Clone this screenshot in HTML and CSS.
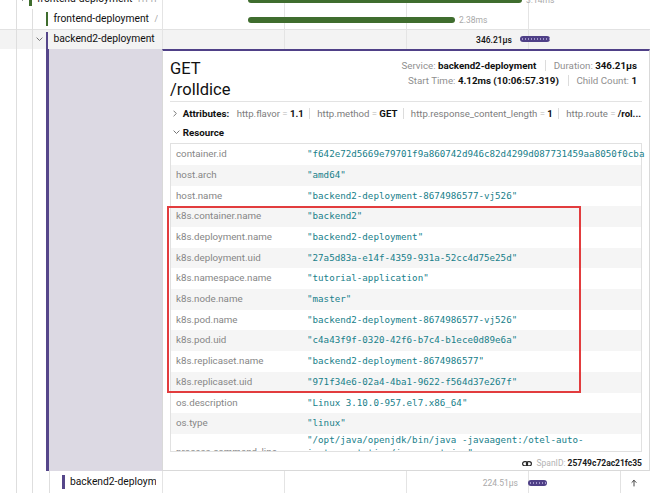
FILE: index.html
```html
<!DOCTYPE html>
<html>
<head>
<meta charset="utf-8">
<link rel="stylesheet" href="styles.css">
</head>
<body>
<div class="trace">
  <div class="row">
    <div class="name-cell">
      <span class="indent"></span>
      <span class="toggle"><svg class="chev" viewBox="0 0 8 5"><polyline points="1,1 4,4 7,1"/></svg></span>
      <span class="svc-bar svc-bar--green"></span>
      <span class="span-name">frontend-deployment<span class="op">HTTP GET</span></span>
    </div>
    <div class="timeline-cell">
      <span class="span-bar span-bar--green" style="left:86px;width:274px"></span>
      <span class="bar-label" style="left:364px">3.14ms</span>
    </div>
  </div>
  <div class="row">
    <div class="name-cell">
      <span class="indent"></span><span class="indent"></span>
      <span class="toggle"></span>
      <span class="svc-bar svc-bar--green"></span>
      <span class="span-name">frontend-deployment<span class="op">/rolldice</span></span>
    </div>
    <div class="timeline-cell">
      <span class="span-bar span-bar--green" style="left:86px;width:207px"></span>
      <span class="bar-label" style="left:297px">2.38ms</span>
    </div>
  </div>
  <div class="row row--expanded">
    <div class="name-cell">
      <span class="indent"></span><span class="indent"></span>
      <span class="toggle"><svg class="chev" viewBox="0 0 8 5"><polyline points="1,1 4,4 7,1"/></svg></span>
      <span class="svc-bar svc-bar--purple svc-bar--open"></span>
      <span class="span-name">backend2-deployment<span class="op">GET /rolldice</span></span>
    </div>
    <div class="timeline-cell">
      <span class="bar-label bar-label--strong" style="right:134px">346.21µs</span>
      <span class="span-bar span-bar--purple span-bar--logs" style="left:358px;width:30px"></span>
    </div>
  </div>

  <div class="detail-row">
    <div class="name-cell name-cell--detail">
      <span class="indent"></span><span class="indent"></span>
      <span class="toggle"></span>
      <span class="accent"></span>
    </div>
    <div class="detail-cell">
      <div class="detail-wrapper">
        <div class="detail-header">
          <h2 class="op-title">GET /rolldice</h2>
          <div class="overview">
            <div class="ov-line">
              <span class="ov-item"><span class="ov-label">Service:</span> <strong>backend2-deployment</strong></span>
              <span class="sep"></span>
              <span class="ov-item"><span class="ov-label">Duration:</span> <strong>346.21µs</strong></span>
            </div>
            <div class="ov-line">
              <span class="ov-item"><span class="ov-label">Start Time:</span> <strong>4.12ms (10:06:57.319)</strong></span>
              <span class="sep"></span>
              <span class="ov-item"><span class="ov-label">Child Count:</span> <strong>1</strong></span>
            </div>
          </div>
        </div>
        <div class="divider"></div>

        <div class="section-head section-head--attrs">
          <span class="sec-chev"><svg class="chev-right" viewBox="0 0 5 8"><polyline points="1,1 4,4 1,7"/></svg></span>
          <strong class="sec-title">Attributes:</strong>
          <span class="attr"><span class="attr-key">http.flavor</span><span class="attr-eq">=</span><strong>1.1</strong></span>
          <span class="sep"></span>
          <span class="attr"><span class="attr-key">http.method</span><span class="attr-eq">=</span><strong>GET</strong></span>
          <span class="sep"></span>
          <span class="attr"><span class="attr-key">http.response_content_length</span><span class="attr-eq">=</span><strong>1</strong></span>
          <span class="sep"></span>
          <span class="attr"><span class="attr-key">http.route</span><span class="attr-eq">=</span><strong>/rol...</strong></span>
        </div>

        <div class="section-head section-head--res">
          <span class="sec-chev"><svg class="chev" viewBox="0 0 8 5"><polyline points="1,1 4,4 7,1"/></svg></span>
          <strong class="sec-title">Resource</strong>
        </div>

        <div class="kv-block">
          <div class="kv-wrap">
            <table class="kv-table">
              <tr class="kv-row"><td class="kv-key">container.id</td><td class="kv-val kv-val--nowrap">"f642e72d5669e79701f9a860742d946c82d4299d087731459aa8050f0cba</td></tr>
              <tr class="kv-row"><td class="kv-key">host.arch</td><td class="kv-val">"amd64"</td></tr>
              <tr class="kv-row"><td class="kv-key">host.name</td><td class="kv-val">"backend2-deployment-8674986577-vj526"</td></tr>
              <tr class="kv-row"><td class="kv-key">k8s.container.name</td><td class="kv-val">"backend2"</td></tr>
              <tr class="kv-row"><td class="kv-key">k8s.deployment.name</td><td class="kv-val">"backend2-deployment"</td></tr>
              <tr class="kv-row"><td class="kv-key">k8s.deployment.uid</td><td class="kv-val">"27a5d83a-e14f-4359-931a-52cc4d75e25d"</td></tr>
              <tr class="kv-row"><td class="kv-key">k8s.namespace.name</td><td class="kv-val">"tutorial-application"</td></tr>
              <tr class="kv-row"><td class="kv-key">k8s.node.name</td><td class="kv-val">"master"</td></tr>
              <tr class="kv-row"><td class="kv-key">k8s.pod.name</td><td class="kv-val">"backend2-deployment-8674986577-vj526"</td></tr>
              <tr class="kv-row"><td class="kv-key">k8s.pod.uid</td><td class="kv-val">"c4a43f9f-0320-42f6-b7c4-b1ece0d89e6a"</td></tr>
              <tr class="kv-row"><td class="kv-key">k8s.replicaset.name</td><td class="kv-val">"backend2-deployment-8674986577"</td></tr>
              <tr class="kv-row"><td class="kv-key">k8s.replicaset.uid</td><td class="kv-val">"971f34e6-02a4-4ba1-9622-f564d37e267f"</td></tr>
              <tr class="kv-row"><td class="kv-key">os.description</td><td class="kv-val">"Linux 3.10.0-957.el7.x86_64"</td></tr>
              <tr class="kv-row"><td class="kv-key">os.type</td><td class="kv-val">"linux"</td></tr>
              <tr class="kv-row kv-row--tall"><td class="kv-key">process.command_line</td><td class="kv-val">"/opt/java/openjdk/bin/java -javaagent:/otel-auto-instrumentation/javaagent.jar"</td></tr>
            </table>
          </div>
          <div class="highlight"></div>
        </div>

        <div class="span-id-line">
          <svg class="link-icon" viewBox="0 0 20 11"><rect x="1.2" y="1.2" width="10" height="8.6" rx="4.3"/><rect x="8.8" y="1.2" width="10" height="8.6" rx="4.3"/></svg>
          <span class="sid-label">SpanID:</span>
          <strong class="sid-value">25749c72ac21fc35</strong>
        </div>
      </div>
    </div>
  </div>

  <div class="row row--last">
    <div class="name-cell name-cell--tight">
      <span class="indent"></span><span class="indent"></span><span class="indent"></span>
      <span class="toggle"></span>
      <span class="svc-bar svc-bar--purple"></span>
      <span class="span-name">backend2-deployment<span class="op">GET</span></span>
    </div>
    <div class="timeline-cell">
      <span class="bar-label" style="right:127px">224.51µs</span>
      <span class="span-bar span-bar--purple span-bar--logs" style="left:366px;width:19px"></span>
    </div>
  </div>
</div>
<button class="scroll-top" type="button" aria-label="Scroll to top">
  <svg viewBox="0 0 8 10"><path d="M4 9V1.5M1.2 4.2L4 1.4l2.8 2.8"/></svg>
</button>
</body>
</html>
```

FILE: styles.css
```css
* { box-sizing: border-box; }
html, body { margin: 0; padding: 0; }
body {
  width: 650px;
  height: 493px;
  overflow: hidden;
  position: relative;
  background: #fff;
  font-family: Roboto, "Liberation Sans", sans-serif;
  color: #1a1a1a;
}

.trace { margin-top: -11px; }

.row { display: flex; height: 20px; }
.row--expanded {
  height: 19.5px;
  background: #f3f3f3;
  box-shadow: inset 0 1px 0 #e2e2e2;
}
.row--last { height: 22px; }

/* name column */
.name-cell {
  width: 162px;
  flex: none;
  display: flex;
  align-items: stretch;
  padding-right: 4.5px;
  overflow: hidden;
}
.name-cell--detail { padding-right: 0; }
.name-cell--tight { padding-right: 5.8px; }
.indent {
  width: 16.5px;
  flex: none;
  border-right: 1px solid #dedede;
}
.toggle {
  width: 12.8px;
  flex: none;
  display: flex;
  align-items: center;
  justify-content: center;
}
.chev { width: 7px; height: 4.4px; }
.chev polyline, .chev-right polyline {
  fill: none;
  stroke: #6f6f6f;
  stroke-width: 1.1;
  stroke-linecap: round;
  stroke-linejoin: round;
}
.svc-bar {
  width: 2.7px;
  height: 13.5px;
  flex: none;
  align-self: center;
}
.svc-bar--green { background: #3f6d2e; }
.svc-bar--purple { background: #55468a; }
.svc-bar--open { align-self: stretch; height: auto; margin-top: 3px; }
.span-name {
  flex: 1;
  min-width: 0;
  margin-left: 5px;
  font-size: 10.3px;
  line-height: 20px;
  white-space: nowrap;
  overflow: hidden;
  align-self: center;
  color: #111;
}
.op {
  margin-left: 5.5px;
  font-size: 8.6px;
  color: #a2a2a2;
}

/* timeline column */
.timeline-cell {
  flex: 1;
  position: relative;
  background-image: linear-gradient(90deg, #e4e4e4 1px, transparent 1px);
  background-size: 122px 100%;
}
.span-bar {
  position: absolute;
  top: 50%;
  height: 6px;
  margin-top: -2.5px;
  border-radius: 3px;
}
.span-bar--green { background: #3f6d2e; }
.span-bar--purple { background: #4f4087; }
.span-bar--logs {
  background-image: radial-gradient(circle, rgba(190, 180, 225, 0.75) 0.5px, transparent 0.85px);
  background-size: 3px 6px;
  background-position: 1px 0;
}
.bar-label {
  position: absolute;
  top: 50%;
  transform: translateY(-45%);
  font-size: 8.5px;
  line-height: 10px;
  color: #a9a9a9;
  white-space: nowrap;
}
.bar-label--strong { color: #111; font-weight: 500; margin-right: 4px; }
.row--last .bar-label { margin-right: 5px; }

/* detail row */
.detail-row { display: flex; height: 422.5px; }
.accent {
  flex: 1;
  border-left: 3px solid #55468a;
  background: #dcd9e3;
}
.detail-cell { flex: 1; min-width: 0; }
.detail-wrapper {
  height: 100%;
  background: #fff;
  border: 1px solid #d9d9d9;
  border-top: 2px solid #4f4087;
  padding: 7px 7px 0 7px;
}

.detail-header {
  display: flex;
  justify-content: space-between;
  align-items: flex-start;
  height: 43px;
}
.op-title {
  margin: 0;
  width: 90px;
  font-size: 16.5px;
  line-height: 21px;
  font-weight: 400;
  color: #111;
}
.overview {
  display: flex;
  flex-direction: column;
  align-items: flex-end;
  margin-right: 5px;
  font-size: 9.75px;
  line-height: 15px;
  margin-top: 0.5px;
}
.ov-line { display: flex; align-items: center; white-space: nowrap; }
.ov-label { color: #8f8f8f; }
.ov-item strong { color: #111; font-weight: 700; }
.sep {
  width: 1px;
  height: 11px;
  background: #dcdcdc;
  margin: 0 7px;
  flex: none;
}
.ov-line .sep { margin: 0 7.5px 0 9px; }

.divider { height: 1px; background: #e3e3e3; }

.section-head {
  display: flex;
  align-items: center;
  height: 15px;
  font-size: 9.6px;
  white-space: nowrap;
  overflow: hidden;
}
.section-head--attrs { margin-top: 4px; }
.section-head--res { margin-top: 4.6px; }
.sec-chev {
  width: 12.7px;
  flex: none;
  display: flex;
  align-items: center;
  padding-left: 2.5px;
}
.chev-right { width: 4.2px; height: 7px; }
.sec-title { font-weight: 700; color: #111; margin-right: 7.5px; font-size: 9.75px; }
.attr-key { color: #7d7d7d; }
.attr-eq { color: #b5b5b5; margin: 0 2.3px; }
.attr strong { color: #111; font-weight: 700; }
.section-head--attrs .sep { margin: 0 7px 0 5.5px; }

/* key/value table */
.kv-block { position: relative; margin-top: 3px; }
.kv-wrap {
  height: 309.3px;
  border: 1px solid #e1e1e1;
  overflow-x: visible;
  overflow-y: clip;
}
.kv-table {
  width: 100%;
  border-collapse: collapse;
  table-layout: fixed;
}
.kv-table td {
  padding: 4px 5px;
  height: 20.7px;
  line-height: 12.7px;
  vertical-align: middle;
}
.kv-row:nth-child(2n) td { background: #f5f5f5; }
.kv-key {
  width: 131px;
  padding-left: 4px;
  color: #868686;
  font-size: 9.75px;
  white-space: pre;
}
.kv-val {
  font-family: "DejaVu Sans Mono", "Liberation Mono", monospace;
  font-size: 9.2px;
  color: #17808a;
}
.kv-val--nowrap { white-space: nowrap; }
.kv-row--tall .kv-val { padding-top: 0; }
.kv-row--tall .kv-key { vertical-align: top; padding-top: 12px; }

.highlight {
  position: absolute;
  left: -3.3px;
  top: 63px;
  width: 414.3px;
  height: 187px;
  border: 2px solid #e23c3e;
  pointer-events: none;
}

.span-id-line {
  display: flex;
  justify-content: flex-end;
  align-items: center;
  height: 12px;
  margin-top: 5px;
  font-size: 8.5px;
  white-space: nowrap;
}
.link-icon { width: 10px; height: 5.5px; margin-right: 4px; }
.link-icon rect { fill: none; stroke: #2a2a2a; stroke-width: 2.4; }
.sid-label { color: #b3b3b3; margin-right: 2px; }
.sid-value { color: #1a1a1a; font-weight: 700; }

/* scroll to top button */
.scroll-top {
  position: absolute;
  right: 0;
  bottom: 0;
  width: 30px;
  height: 22px;
  margin: 0;
  padding: 0;
  border: 0;
  border-left: 1px solid #e2e2e2;
  background: #fff;
  display: flex;
  align-items: center;
  justify-content: center;
}
.scroll-top svg { width: 6px; height: 8px; margin-left: -3px; margin-top: 2px; }
.scroll-top path { fill: none; stroke: #333; stroke-width: 1.2; stroke-linecap: round; stroke-linejoin: round; }
```
